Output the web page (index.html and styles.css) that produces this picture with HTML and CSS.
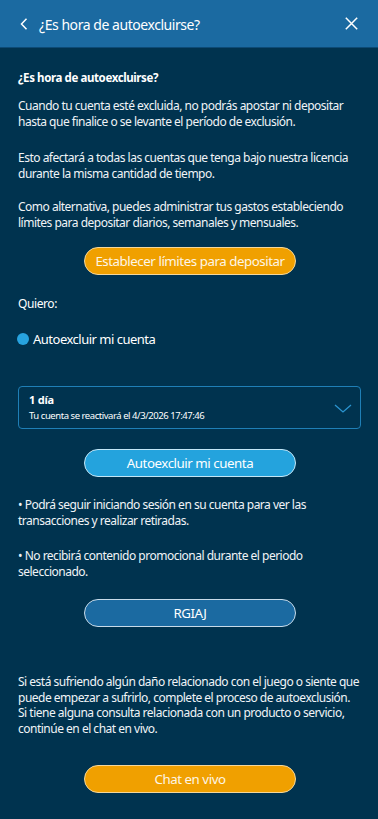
FILE: index.html
```html
<!DOCTYPE html>
<html lang="es">
<head>
<meta charset="utf-8">
<link rel="stylesheet" href="styles.css">
</head>
<body>
<div class="page">
  <header class="header">
    <svg class="back" width="8" height="12" viewBox="0 0 8 12"><path d="M6.5 0.8 L1.5 6 L6.5 11.2" fill="none" stroke="#fff" stroke-width="1.5"/></svg>
    <span class="htitle">¿Es hora de autoexcluirse?</span>
    <svg class="close" width="13" height="13" viewBox="0 0 13 13"><path d="M0.8 0.8 L12.2 12.2 M12.2 0.8 L0.8 12.2" fill="none" stroke="#fff" stroke-width="1.5"/></svg>
  </header>
  <main class="content">
    <h1 class="title">¿Es hora de autoexcluirse?</h1>
    <p class="para p1">Cuando tu cuenta esté excluida, no podrás apostar ni depositar hasta que finalice o se levante el período de exclusión.</p>
    <p class="para">Esto afectará a todas las cuentas que tenga bajo nuestra licencia durante la misma cantidad de tiempo.</p>
    <p class="para p3">Como alternativa, puedes administrar tus gastos estableciendo límites para depositar diarios, semanales y mensuales.</p>
    <div class="btnrow b1"><button class="btn orange">Establecer límites para depositar</button></div>
    <p class="quiero">Quiero:</p>
    <div class="radio"><span class="dot"></span><span>Autoexcluir mi cuenta</span></div>
    <div class="select">
      <div class="seltext">
        <div class="selmain">1 día</div>
        <div class="selsub">Tu cuenta se reactivará el 4/3/2026 17:47:46</div>
      </div>
      <svg class="chev" width="18" height="9" viewBox="0 0 18 9"><path d="M1 1 L9 8 L17 1" fill="none" stroke="#2a94cf" stroke-width="1.3"/></svg>
    </div>
    <div class="btnrow b2"><button class="btn blue">Autoexcluir mi cuenta</button></div>
    <p class="para bullet">• Podrá seguir iniciando sesión en su cuenta para ver las transacciones y realizar retiradas.</p>
    <p class="para bullet b2nd">• No recibirá contenido promocional durante el periodo seleccionado.</p>
    <div class="btnrow b3"><button class="btn dark">RGIAJ</button></div>
    <p class="para final">Si está sufriendo algún daño relacionado con el juego o siente que puede empezar a sufrirlo, complete el proceso de autoexclusión. Si tiene alguna consulta relacionada con un producto o servicio, continúe en el chat en vivo.</p>
    <div class="btnrow b4"><button class="btn orange">Chat en vivo</button></div>
  </main>
</div>
</body>
</html>
```
FILE: styles.css
```css
* { box-sizing: border-box; }
html, body { margin: 0; padding: 0; }
body {
  background: #00334f;
  font-family: "Noto Sans", "Open Sans", sans-serif;
  color: #fff;
  width: 378px;
  height: 819px;
  overflow: hidden;
}
.page { width: 378px; }
.header {
  height: 48px;
  background: #1b6aa1;
  border-bottom: 1px solid #0d4a75;
  display: flex;
  align-items: center;
  padding: 0 20px 0 20px;
}
.back { flex: none; margin-right: 11px; margin-top: 1px; }
.htitle { flex: 1; font-size: 14px; letter-spacing: -0.45px; margin-top: 1px; }
.close { flex: none; margin-top: 0; }
.content { padding: 22px 17px 0 18px; }
.title { font-size: 11.5px; font-weight: 700; margin: 0; line-height: 16px; letter-spacing: -0.4px; }
.para { font-size: 12px; line-height: 16px; margin: 20px 0 0; letter-spacing: -0.5px; color: #f0f4f7; }
.para.p1 { margin-top: 12px; }
.para.p3 { margin-top: 17px; }
.btnrow { display: flex; justify-content: center; }
.btn {
  width: 212px;
  height: 28px;
  border-radius: 14px;
  font-family: inherit;
  font-size: 13.3px;
  letter-spacing: -0.45px;
  color: #fff;
  padding: 0;
  margin-left: 1px;
}
.btn.orange { background: #f0a000; border: 1px solid #f5d79a; color: #fdf6e6; }
.btn.blue { background: #24a3dd; border: 1px solid #c3e6f6; }
.btn.dark { background: #1b6aa1; border: 1px solid #c8dbe9; }
.btnrow.b1 { margin-top: 16px; }
.quiero { font-size: 12px; margin: 21px 0 0; line-height: 16px; letter-spacing: -0.4px; }
.radio { display: flex; align-items: center; margin-top: 19px; font-size: 13px; letter-spacing: -0.5px; line-height: 16px; }
.dot { width: 12px; height: 12px; border-radius: 50%; background: #27a3df; margin-right: 4px; margin-left: -1px; }
.select {
  margin-top: 39px;
  height: 43px;
  border: 1px solid #1f7fb6;
  border-radius: 4px;
  display: flex;
  align-items: center;
  padding: 0 8px 0 10px;
}
.seltext { flex: 1; }
.selmain { font-size: 11px; font-weight: 700; line-height: 14px; letter-spacing: -0.2px; }
.selsub { font-size: 9.5px; line-height: 14px; margin-top: 2px; letter-spacing: -0.45px; }
.chev { flex: none; margin-top: 2px; }
.btnrow.b2 { margin-top: 20px; }
.bullet { margin-top: 20px; }
.bullet.b2nd { margin-top: 19px; }
.btnrow.b3 { margin-top: 19px; }
.final { margin-top: 47px; line-height: 15.7px; }
.btnrow.b4 { margin-top: 28px; }
```
